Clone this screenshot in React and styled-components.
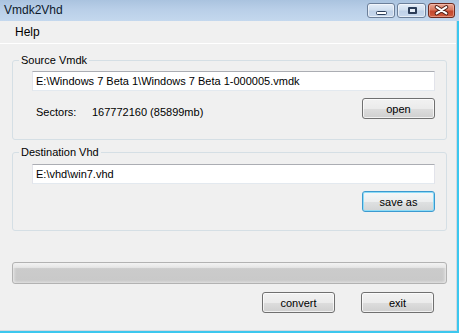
import React from 'react';
import styled, { createGlobalStyle } from 'styled-components';

const GlobalStyle = createGlobalStyle`
  html, body {
    margin: 0;
    padding: 0;
    background: #f0f0f0;
  }
  body {
    font-family: "Liberation Sans", Arial, sans-serif;
    color: #000;
  }
`;

const CaptionButton = ({ kind }) => {
  const glyphs = {
    min: <rect x="8.5" y="7.5" width="10" height="3" rx="1" fill="#fff" stroke="#2b3d59" />,
    max: (
      <g>
        <rect x="9" y="3" width="9" height="7" rx="1" fill="#2b3d59" />
        <rect x="11" y="5" width="5" height="3" fill="#e6eef8" />
      </g>
    ),
    close: (
      <g strokeLinecap="round">
        <path d="M8 3 L18 9.5 M18 3 L8 9.5" stroke="#4d1d15" strokeWidth="4.2" />
        <path d="M8 3 L18 9.5 M18 3 L8 9.5" stroke="#fff" strokeWidth="2.2" />
      </g>
    )
  };
  return (
    <CapBtn $close={kind === 'close'} $w={kind === 'max' ? 29 : kind === 'close' ? 27 : 28}>
      <svg width="26" height="13" viewBox="0 0 26 13">{glyphs[kind]}</svg>
    </CapBtn>
  );
};

const App = () => {
  return (
    <>
      <GlobalStyle />
      <Window>
        <TitleBar>
          <Title>Vmdk2Vhd</Title>
          <Controls>
            <CaptionButton kind="min" />
            <CaptionButton kind="max" />
            <CaptionButton kind="close" />
          </Controls>
        </TitleBar>
        <Frame>
          <Client>
            <MenuBar>
              <MenuItem>Help</MenuItem>
            </MenuBar>
            <Content>
              <Group $top={9}>
                <Legend>Source Vmdk</Legend>
                <GroupBody $pt={4} $pb={20}>
                  <TextBox readOnly value="E:\Windows 7 Beta 1\Windows 7 Beta 1-000005.vmdk" />
                  <ActionRow>
                    <Info>
                      <InfoLabel>Sectors:</InfoLabel>
                      <span>167772160 (85899mb)</span>
                    </Info>
                    <Button>open</Button>
                  </ActionRow>
                </GroupBody>
              </Group>
              <Group $top={5}>
                <Legend>Destination Vhd</Legend>
                <GroupBody $pt={5} $pb={18}>
                  <TextBox readOnly value="E:\vhd\win7.vhd" />
                  <ActionRow>
                    <span />
                    <Button $default>save as</Button>
                  </ActionRow>
                </GroupBody>
              </Group>
              <Progress />
              <Footer>
                <Button>convert</Button>
                <Button>exit</Button>
              </Footer>
            </Content>
          </Client>
        </Frame>
      </Window>
    </>
  );
};

const Window = styled.div`
  width: 459px;
  height: 333px;
  display: flex;
  flex-direction: column;
  overflow: hidden;
  background: #f0f0f0;
`;

const TitleBar = styled.div`
  height: 21px;
  flex: none;
  display: flex;
  align-items: flex-start;
  padding-left: 4px;
  background: linear-gradient(#aac3df 0%, #b9cfe8 45%, #c4d8ee 100%);
`;

const Title = styled.span`
  font-size: 12px;
  line-height: 21px;
  color: #0d1a2c;
`;

const Controls = styled.div`
  margin-left: auto;
  display: flex;
  gap: 2px;
  padding: 3px 4px 0 0;
`;

const CapBtn = styled.span`
  width: ${p => p.$w}px;
  height: 15px;
  box-sizing: border-box;
  display: flex;
  align-items: center;
  justify-content: center;
  border: 1px solid ${p => (p.$close ? '#6e2a1f' : '#6c7f99')};
  border-radius: 3px;
  background: ${p =>
    p.$close
      ? 'linear-gradient(#e8a795 0%, #d8785f 45%, #c4472e 55%, #cf5d3f 100%)'
      : 'linear-gradient(#e4edf8 0%, #d1dfef 45%, #bfd1e8 55%, #c8d9ee 100%)'};
  box-shadow: inset 0 0 0 1px ${p => (p.$close ? 'rgba(255,210,200,0.45)' : 'rgba(255,255,255,0.55)')};
`;

const Frame = styled.div`
  flex: 1;
  display: flex;
  border-right: 2px solid #3cc7ee;
  border-bottom: 2px solid #3cc7ee;
`;

const Client = styled.div`
  flex: 1;
  display: flex;
  flex-direction: column;
  border-right: 1px solid #d3d9e0;
  border-bottom: 1px solid #d3d9e0;
`;

const MenuBar = styled.div`
  height: 22px;
  flex: none;
  display: flex;
  align-items: center;
  padding-left: 15px;
  border-bottom: 1px solid #ffffff;
  background: #f0f0f0;
`;

const MenuItem = styled.span`
  font-size: 12px;
  line-height: 16px;
`;

const Content = styled.div`
  display: flex;
  flex-direction: column;
  padding: 0 9px 0 12px;
`;

const Group = styled.fieldset`
  margin: ${p => p.$top}px 0 0;
  padding: 0;
  min-width: 0;
  border: 1px solid #d5dfe5;
  border-radius: 3px;
`;

const Legend = styled.legend`
  margin-left: 6px;
  padding: 0 2px;
  font-size: 11px;
  line-height: 14px;
`;

const GroupBody = styled.div`
  display: flex;
  flex-direction: column;
  padding: ${p => p.$pt}px 11px ${p => p.$pb}px 19px;
`;

const TextBox = styled.input`
  height: 20px;
  box-sizing: border-box;
  margin: 0;
  padding: 0 3px;
  border: 1px solid #e2e3ea;
  border-top-color: #abadb3;
  border-bottom-color: #e3e9ef;
  background: #fff;
  font-family: "Liberation Sans", Arial, sans-serif;
  font-size: 11px;
  color: #000;
  outline: none;
`;

const ActionRow = styled.div`
  display: flex;
  justify-content: space-between;
  align-items: flex-start;
  margin-top: 7px;
`;

const Info = styled.div`
  display: flex;
  margin-top: 8px;
  padding-left: 4px;
  font-size: 11px;
  line-height: 13px;
`;

const InfoLabel = styled.span`
  width: 56px;
`;

const Button = styled.button`
  width: 73px;
  height: 21px;
  box-sizing: border-box;
  margin: 0;
  padding: 0;
  border: 1px solid ${p => (p.$default ? '#3c9ad0' : '#707070')};
  border-radius: 3px;
  background: ${p =>
    p.$default
      ? 'linear-gradient(#f6f8f9 0%, #eceeef 50%, #dfe1e2 51%, #d2d4d5 100%)'
      : 'linear-gradient(#f2f2f2 0%, #ebebeb 50%, #dddddd 51%, #cfcfcf 100%)'};
  box-shadow: inset 0 0 0 1px ${p => (p.$default ? '#8fdcf6' : 'rgba(255,255,255,0.7)')};
  font-family: "Liberation Sans", Arial, sans-serif;
  font-size: 11px;
  color: #000;
`;

const Progress = styled.div`
  margin-top: 31px;
  height: 22px;
  box-sizing: border-box;
  border: 1px solid #b2b2b2;
  border-radius: 3px;
  background: linear-gradient(#f3f3f3 0%, #e6e6e6 22%, #cbcbcb 28%, #c9c9c9 85%, #dcdcdc 100%);
  box-shadow: inset 3px 0 3px -2px #ececec, inset -3px 0 3px -2px #ececec;
`;

const Footer = styled.div`
  display: flex;
  justify-content: flex-end;
  gap: 26px;
  margin-top: 8px;
  padding-right: 13px;
`;

export default App;
